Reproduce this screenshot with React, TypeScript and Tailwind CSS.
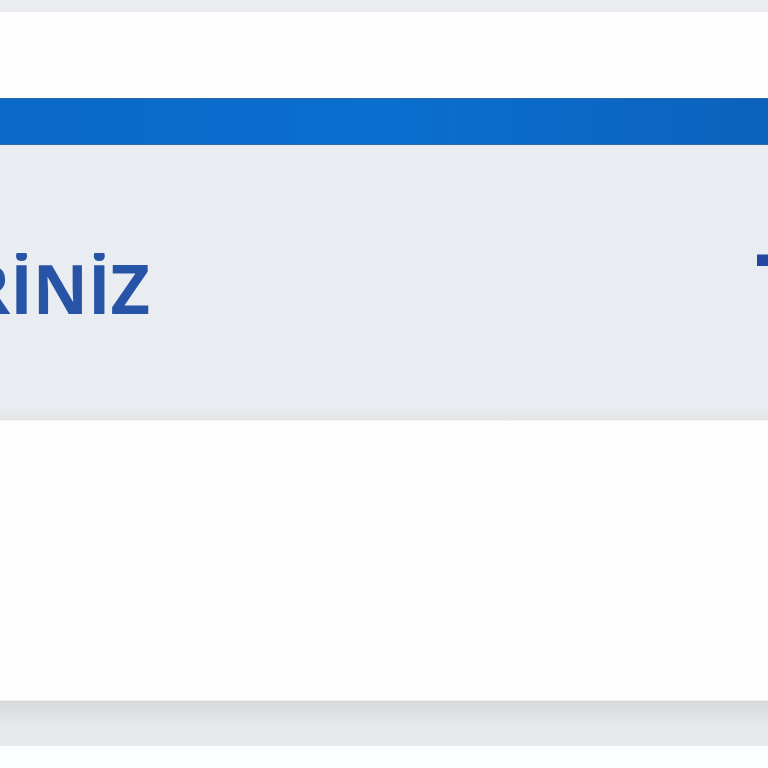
export default function App() {
  return (
    <div className="w-[768px] h-[768px] overflow-hidden bg-white flex flex-col font-['Open_Sans',sans-serif]">
      {/* top strip */}
      <div className="h-[12px] bg-[#ebecf0] shrink-0" />

      {/* white header space */}
      <div className="h-[86px] bg-[#fefefe] shrink-0" />

      {/* blue bar */}
      <div className="h-[47px] shrink-0 border-y border-[#2f68a8] bg-gradient-to-r from-[#0a68c8] via-[#0a6fcf] to-[#0c62bd]" />

      {/* title band */}
      <div className="h-[275px] shrink-0 flex flex-col bg-[#e9edf1]">
        <div className="flex-1 flex items-start justify-between pt-[100px]">
          <div className="w-[150px] overflow-hidden flex justify-end mt-[8px]">
            <span className="whitespace-nowrap text-[68px] leading-[70px] font-bold text-[#2754a6]">
              BİLGİLERİNİZ
            </span>
          </div>
          <div className="w-[11px] overflow-hidden">
            <span className="block whitespace-nowrap text-[92px] leading-[80px] font-bold text-[#2348a3] -ml-[2px]">
              T
            </span>
          </div>
        </div>
        <div className="h-[12px] bg-gradient-to-b from-[#e9ecef] to-[#e2e3e5]" />
      </div>

      {/* white content */}
      <div className="h-[280px] shrink-0 bg-[#fdfdfd] border-t border-[#f3f3f3]" />

      {/* bottom band */}
      <div className="h-[46px] shrink-0 bg-gradient-to-b from-[#d6d9dc] via-[#e6e9ec] to-[#e7eaed] border-t border-[#eceef0]" />

      <div className="flex-1 bg-[#fbfdfe]" />
    </div>
  );
}
